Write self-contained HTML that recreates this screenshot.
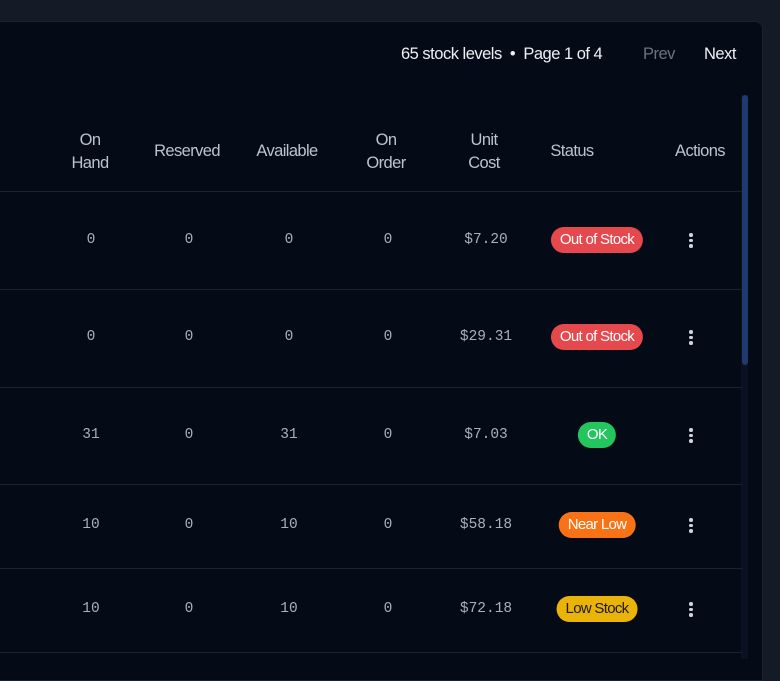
<!DOCTYPE html>
<html><head><style>
*{margin:0;padding:0;box-sizing:border-box}
body{width:780px;height:659px;background:#141a26;position:relative;overflow:hidden;font-family:"Liberation Sans",sans-serif}
.panel{position:absolute;left:0;top:21px;width:763px;height:660px;background:#050a17;border-radius:0 8px 0 0;border:1px solid #1a2030;border-left:none}
.t{position:absolute;color:#eef0f4;font-size:16.5px;letter-spacing:-0.5px;white-space:nowrap}
.h{position:absolute;color:#bcc3cf;font-size:16.5px;letter-spacing:-0.6px;text-align:center;line-height:23px;transform:translateX(-50%);white-space:nowrap}
.n{position:absolute;color:#a8b0bd;font-family:"Liberation Mono",monospace;font-size:14.5px;transform:translate(-50%,-50%)}
.line{position:absolute;left:0;width:742px;height:1px;background:#1c2232}
.b{position:absolute;transform:translate(-50%,-50%);border-radius:14px;color:#fff;font-size:15px;letter-spacing:-0.7px;height:26px;line-height:26px;padding:0 9px;white-space:nowrap}
.d{position:absolute;width:3.5px;height:3.5px;background:#d0d4dc;border-radius:50%;left:689px}
</style></head><body>
<div class="panel"></div>
<div class="t" style="left:401px;top:45px">65 stock levels &nbsp;•&nbsp; Page 1 of 4</div>
<div class="t" style="left:643px;top:45px;color:#6b7280">Prev</div>
<div class="t" style="left:704px;top:45px">Next</div>
<div style="position:absolute;left:741px;top:95px;width:7px;height:564px;background:#0b1122"></div>
<div style="position:absolute;left:742px;top:95px;width:6px;height:270px;background:#1e3a6e;border-radius:3px"></div>
<div class="h" style="left:90px;top:129px">On<br>Hand</div>
<div class="h" style="left:187px;top:140px">Reserved</div>
<div class="h" style="left:287px;top:140px">Available</div>
<div class="h" style="left:386px;top:129px">On<br>Order</div>
<div class="h" style="left:484px;top:129px">Unit<br>Cost</div>
<div class="h" style="left:572px;top:140px">Status</div>
<div class="h" style="left:700px;top:140px">Actions</div>
<div class="line" style="top:191px"></div>
<div class="line" style="top:289px"></div>
<div class="line" style="top:387px"></div>
<div class="line" style="top:484px"></div>
<div class="line" style="top:568px"></div>
<div class="line" style="top:652px"></div>

<div class="n" style="left:91px;top:240px">0</div><div class="n" style="left:189px;top:240px">0</div><div class="n" style="left:289px;top:240px">0</div><div class="n" style="left:388px;top:240px">0</div><div class="n" style="left:486px;top:240px">$7.20</div>
<div class="b" style="left:597px;top:240px;background:#e5484d">Out of Stock</div>
<div class="n" style="left:91px;top:337px">0</div><div class="n" style="left:189px;top:337px">0</div><div class="n" style="left:289px;top:337px">0</div><div class="n" style="left:388px;top:337px">0</div><div class="n" style="left:486px;top:337px">$29.31</div>
<div class="b" style="left:597px;top:337px;background:#e5484d">Out of Stock</div>
<div class="n" style="left:91px;top:435px">31</div><div class="n" style="left:189px;top:435px">0</div><div class="n" style="left:289px;top:435px">31</div><div class="n" style="left:388px;top:435px">0</div><div class="n" style="left:486px;top:435px">$7.03</div>
<div class="b" style="left:597px;top:435px;background:#22c55e">OK</div>
<div class="n" style="left:91px;top:525px">10</div><div class="n" style="left:189px;top:525px">0</div><div class="n" style="left:289px;top:525px">10</div><div class="n" style="left:388px;top:525px">0</div><div class="n" style="left:486px;top:525px">$58.18</div>
<div class="b" style="left:597px;top:525px;background:#f97316">Near Low</div>
<div class="n" style="left:91px;top:609px">10</div><div class="n" style="left:189px;top:609px">0</div><div class="n" style="left:289px;top:609px">10</div><div class="n" style="left:388px;top:609px">0</div><div class="n" style="left:486px;top:609px">$72.18</div>
<div class="b" style="left:597px;top:609px;background:#eab308;color:#1a1a1a">Low Stock</div>

<div class="d" style="top:233px"></div><div class="d" style="top:238.5px"></div><div class="d" style="top:244px"></div>
<div class="d" style="top:330px"></div><div class="d" style="top:335.5px"></div><div class="d" style="top:341px"></div>
<div class="d" style="top:428px"></div><div class="d" style="top:433.5px"></div><div class="d" style="top:439px"></div>
<div class="d" style="top:518px"></div><div class="d" style="top:523.5px"></div><div class="d" style="top:529px"></div>
<div class="d" style="top:602px"></div><div class="d" style="top:607.5px"></div><div class="d" style="top:613px"></div>
</body></html>
